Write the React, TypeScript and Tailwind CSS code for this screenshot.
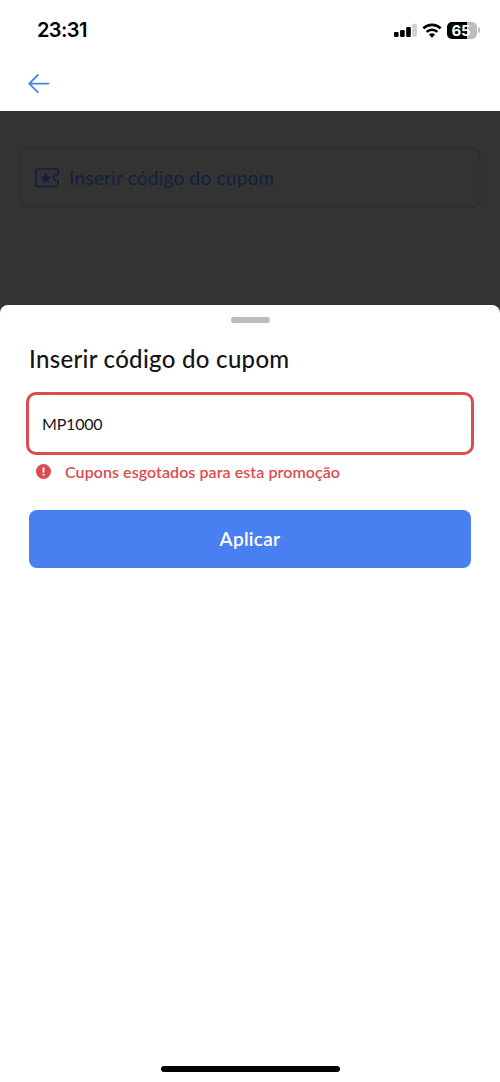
import { useState } from 'react';

function StatusBar() {
  return (
    <div className="flex h-[60px] items-center justify-between pl-[37px] pr-5">
      <span className="font-['Inter',sans-serif] text-[20px] font-semibold leading-none tracking-[-0.6px] text-black">
        23:31
      </span>
      <div className="flex items-center">
        {/* Signal */}
        <svg className="h-[14px] w-[23px]" viewBox="0 0 23 14" fill="#000">
          <rect x="0" y="9" width="4.6" height="5" rx="1.2" />
          <rect x="6.1" y="7" width="4.6" height="7" rx="1.2" />
          <rect x="12.2" y="4" width="4.6" height="10" rx="1.2" />
          <rect x="18.3" y="0.8" width="4.6" height="13.2" rx="1.2" fill="#d2d2d2" />
        </svg>
        {/* Wi-Fi */}
        <svg className="ml-[5px] h-[15px] w-[20px]" viewBox="0 0 20 15" fill="none" stroke="#000" strokeWidth="2.7">
          <path d="M1.3 5.3a12.6 12.6 0 0 1 17.4 0" />
          <path d="M4.6 8.9a7.8 7.8 0 0 1 10.8 0" />
          <path d="M10 14.8l-3-3a4.3 4.3 0 0 1 6 0z" fill="#000" stroke="none" />
        </svg>
        {/* Battery */}
        <div className="ml-[5px] flex h-[17px] w-[30px] items-center justify-center rounded-[5px] bg-linear-to-r from-black from-65% to-[#bdbdbd] to-65%">
          <span className="mr-[2px] font-['Inter',sans-serif] text-[15px] font-bold leading-none tracking-[-0.2px] text-white">
            65
          </span>
        </div>
        <div className="ml-px h-[6px] w-[2px] rounded-r-full bg-[#bdbdbd]" />
      </div>
    </div>
  );
}

function TicketIcon() {
  return (
    <svg className="h-5 w-6" viewBox="0 0 24 20" fill="none" stroke="#13203f" strokeWidth="1.7" strokeLinejoin="round">
      <path d="M2.500 1h19a1.500 1.500 0 0 1 1.500 1.500v4.200h-1.200a3.100 3.100 0 0 0 0 6.200H23v4.100a1.500 1.500 0 0 1-1.500 1.500h-19A1.500 1.500 0 0 1 1 17v-14.500A1.500 1.500 0 0 1 2.500 1z" />
      <path
        d="M11 4.300l1.700 3.600 3.900.5-2.900 2.700.8 3.900-3.500-1.900-3.500 1.900.8-3.900-2.900-2.700 3.900-.5z"
        fill="#13203f"
        stroke="none"
      />
    </svg>
  );
}

export default function App() {
  const [code, setCode] = useState('MP1000');

  return (
    <div className="flex h-[1082px] w-full flex-col overflow-hidden bg-white font-['Lato',sans-serif]">
      <StatusBar />

      <header className="flex h-[51px] shrink-0 items-center pl-7 pb-1">
        <button type="button" aria-label="Voltar">
          <svg className="h-5 w-[22px]" viewBox="0 0 22 20" fill="none" stroke="#4880f0" strokeWidth="1.8" strokeLinecap="round" strokeLinejoin="round">
            <path d="M20.500 9.600H1.200M9.800 1l-8.600 8.600 8.600 8.600" />
          </svg>
        </button>
      </header>

      {/* Dimmed page behind the sheet */}
      <div className="h-[202px] shrink-0 bg-[#333] px-[19px] pt-9">
        <div className="flex h-[61px] items-center rounded-[8px] border-2 border-[#2f2f2f] pl-3.5">
          <TicketIcon />
          <span className="ml-2.5 text-[19px] leading-6 tracking-[0.23px] text-[#13203f]">
            Inserir código do cupom
          </span>
        </div>
      </div>

      {/* Bottom sheet */}
      <section className="-mt-2 flex flex-1 flex-col rounded-t-[8px] bg-white">
        <div className="mx-auto mt-[12px] h-[6px] w-[39px] shrink-0 rounded-full bg-[#bdbdbd]" />
        <h1 className="ml-[29px] mt-[22px] text-[24px] font-medium leading-[28px] tracking-[0.3px] text-[#151515]">
          Inserir código do cupom
        </h1>
        <input
          className="mx-[26px] mt-[19px] h-[63px] rounded-[10px] border-3 border-[#dc4b52] pl-[13px] text-[16px] tracking-[-0.2px] text-[#151515] outline-none"
          value={code}
          onChange={(e) => setCode(e.target.value)}
        />
        <div className="ml-9 mt-[7px] flex h-5 items-center text-[#dc4b52]">
          <svg className="-mt-px h-[15px] w-[15px]" viewBox="0 0 15 15">
            <circle cx="7.500" cy="7.500" r="7.500" fill="currentColor" />
            <path d="M7.500 3.600v4.800M7.500 9.800v1.700" stroke="#fff" strokeWidth="1.800" />
          </svg>
          <p className="ml-3.5 text-[16px] font-semibold leading-5 tracking-[0.07px]">
            Cupons esgotados para esta promoção
          </p>
        </div>
        <button
          type="button"
          className="mx-[29px] mt-[28px] h-[58px] rounded-[8px] bg-[#4880f1] text-[19px] font-semibold tracking-[0.3px] text-white"
        >
          Aplicar
        </button>
        <div className="mx-auto mb-[10px] mt-auto h-[6px] w-[179px] shrink-0 rounded-full bg-black" />
      </section>
    </div>
  );
}
